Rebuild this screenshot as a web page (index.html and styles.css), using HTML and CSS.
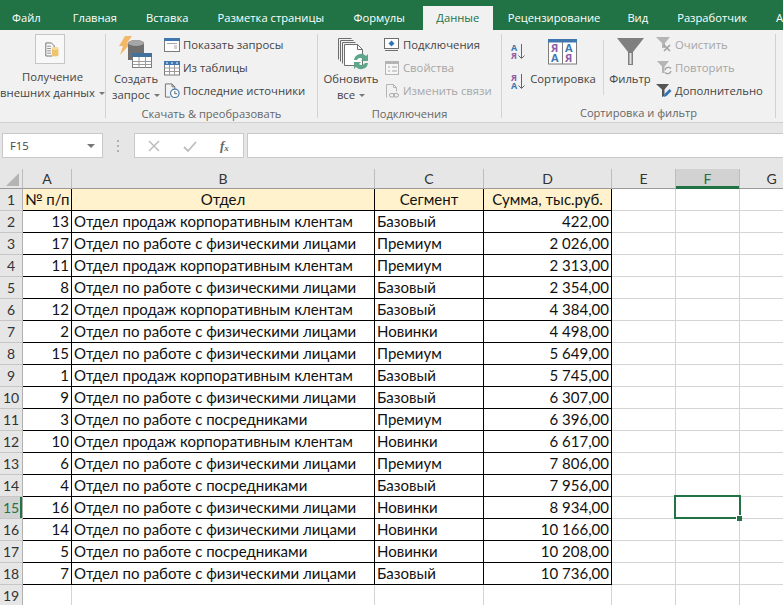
FILE: index.html
```html
<!DOCTYPE html>
<html lang="ru">
<head>
<meta charset="utf-8">
<title>Excel</title>
<link rel="stylesheet" href="styles.css">
</head>
<body>
<nav class="tabs">
  <span class="tab tab-file">Файл</span>
  <span class="tab">Главная</span>
  <span class="tab">Вставка</span>
  <span class="tab">Разметка страницы</span>
  <span class="tab tab-formulas">Формулы</span>
  <span class="tab active">Данные</span>
  <span class="tab tab-review">Рецензирование</span>
  <span class="tab">Вид</span>
  <span class="tab">Разработчик</span>
  <span class="tab">А</span>
</nav>
<section class="ribbon">
  <div class="group g1">
    <div class="group-body">
      <div class="big big-ext">
        <svg class="ext-icon" width="30" height="30" viewBox="0 0 30 30">
          <path d="M10.500 8.500h6l3 3v3M10.500 8.500v14h7" fill="none" stroke="#6e6e6e"/>
          <path d="M12 12h4M12 14.500h4M12 17h4M12 19.500h4" stroke="#8a8a8a"/>
          <path d="M17 14.500a3.500 1.500 0 0 1 7 0v7a3.500 1.500 0 0 1-7 0z" fill="#f0c36d"/>
          <ellipse cx="20.500" cy="14.500" rx="3.500" ry="1.500" fill="#f7dda0"/>
        </svg>
        <span class="big-text">Получение</span>
        <span class="big-text">внешних данных<i class="caret"></i></span>
      </div>
    </div>
    <div class="group-label">&nbsp;</div>
  </div>
  <div class="group g2">
    <div class="group-body">
      <div class="big big-query">
        <svg width="56" height="37" viewBox="0 0 56 37">
          <path d="M17 2h7l-5 7h4L12 21l3-9h-4z" fill="#f2b866"/>
          <path d="M20 9a8 3 0 0 1 16 0v17H20z" fill="#6f6f6f"/>
          <ellipse cx="28" cy="9" rx="8" ry="3" fill="#a6a6a6"/>
          <rect x="24.500" y="19.500" width="19" height="14" fill="#fff" stroke="#7b7b7b"/>
          <rect x="24" y="19" width="20" height="4" fill="#41719c"/>
          <path d="M24.500 27.500h19M24.500 30.500h19M31 23v11M37.500 23v11" stroke="#9a9a9a"/>
        </svg>
        <span class="big-text">Создать</span>
        <span class="big-text">запрос<i class="caret"></i></span>
      </div>
      <div class="small-list">
        <div class="small">
          <svg width="16" height="16" viewBox="0 0 16 16">
            <rect x=".5" y="1.500" width="15" height="13" fill="#fff" stroke="#7b7b7b"/>
            <rect y="1" width="16" height="3" fill="#3f77ae"/>
            <path d="M3 6.500h10M10 9h3M10 11h3" stroke="#a8a8a8"/>
          </svg>
          <span>Показать запросы</span>
        </div>
        <div class="small">
          <svg width="16" height="16" viewBox="0 0 16 16">
            <rect x=".5" y="1.500" width="15" height="13.500" fill="#fff" stroke="#7b7b7b"/>
            <rect y="1" width="16" height="4" fill="#3f77ae"/>
            <path d="M.5 8h15M.5 11.500h15M5.500 5v10M10.500 5v10" stroke="#9a9a9a"/>
            <path d="M2 3h2M7 3h2M12 3h2" stroke="#fff"/>
          </svg>
          <span>Из таблицы</span>
        </div>
        <div class="small">
          <svg width="16" height="17" viewBox="0 0 17 17">
            <path d="M1.500 15.500V1.500h7l3 3v3M8.500 1.500v3h3M1.500 15.500h5" fill="none" stroke="#707070"/>
            <circle cx="11.500" cy="11.500" r="4.500" fill="#fff" stroke="#3f77ae" stroke-width="1.200"/>
            <path d="M11.500 9v3h2.500" fill="none" stroke="#555"/>
          </svg>
          <span>Последние источники</span>
        </div>
      </div>
    </div>
    <div class="group-label">Скачать &amp; преобразовать</div>
  </div>
  <div class="group g3">
    <div class="group-body">
      <div class="big big-refresh">
        <svg width="58" height="37" viewBox="0 0 58 37">
          <path d="M16.500 25.500V4.500h13M18.500 27.500V6.500h13M20.500 29.500V8.500h13" fill="none" stroke="#6e6e6e"/>
          <path d="M22.500 31.500v-21h13l5 5v16z" fill="#fff" stroke="#6e6e6e"/>
          <path d="M35.500 10.500v5h5" fill="none" stroke="#6e6e6e"/>
          <path d="M32 26a7 7 0 0 1 12-4l2-2v7h-7l2-2a4 4 0 0 0-6 1z" fill="#5fa58a"/>
          <path d="M46 29a7 7 0 0 1-12 4l-2 2v-7h7l-2 2a4 4 0 0 0 6-1z" fill="#5fa58a"/>
        </svg>
        <span class="big-text">Обновить</span>
        <span class="big-text">все<i class="caret"></i></span>
      </div>
      <div class="small-list">
        <div class="small">
          <svg width="16" height="16" viewBox="0 0 16 16">
            <rect x=".5" y="1.500" width="14" height="10" fill="#fff" stroke="#6e6e6e"/>
            <path d="M1 13.500h13" stroke="#6e6e6e"/>
            <path d="M7.500 3.500l3 3-3 3-3-3z" fill="#2e75b6"/>
          </svg>
          <span>Подключения</span>
        </div>
        <div class="small off">
          <svg width="16" height="16" viewBox="0 0 16 16">
            <rect x="1.500" y="1.500" width="13" height="13" fill="#f6f6f6" stroke="#b5b5b5"/>
            <rect x="1" y="1" width="14" height="3" fill="#b5b5b5"/>
            <path d="M4 7h2M8 7h5M4 11h2M8 11h5" stroke="#a8a8a8"/>
          </svg>
          <span>Свойства</span>
        </div>
        <div class="small off">
          <svg width="16" height="16" viewBox="0 0 16 16">
            <path d="M2.500 14.500v-13h7l3 3v4M9.500 1.500v3h3" fill="none" stroke="#b5b5b5"/>
            <rect x="5.500" y="10.500" width="5" height="3.500" rx="1.700" fill="none" stroke="#a8a8a8"/>
            <rect x="9.500" y="10.500" width="5" height="3.500" rx="1.700" fill="none" stroke="#a8a8a8"/>
          </svg>
          <span>Изменить связи</span>
        </div>
      </div>
    </div>
    <div class="group-label">Подключения</div>
  </div>
  <div class="group g4">
    <div class="group-body">
      <div class="sort-arrows">
        <svg width="16" height="19" viewBox="0 0 16 19">
          <text x="1" y="8" class="gl gl-blue">А</text>
          <text x="1" y="16" class="gl gl-purple">Я</text>
          <path d="M11.500 1v14M8.500 12.500l3 3 3-3" fill="none" stroke="#666"/>
        </svg>
        <svg width="16" height="19" viewBox="0 0 16 19">
          <text x="1" y="8" class="gl gl-purple">Я</text>
          <text x="1" y="16" class="gl gl-blue">А</text>
          <path d="M11.500 1v14M8.500 12.500l3 3 3-3" fill="none" stroke="#666"/>
        </svg>
      </div>
      <div class="big big-sort">
        <svg width="66" height="37" viewBox="0 0 66 37">
          <rect x="18.500" y="5.500" width="28" height="24.500" fill="#fff" stroke="#7b7b7b"/>
          <rect x="18" y="5" width="29" height="3.500" fill="#3f77ae"/>
          <path d="M32.500 8v22" stroke="#7b7b7b"/>
          <text x="21" y="18" class="gs gl-purple">Я</text>
          <text x="35" y="18" class="gs gl-blue">А</text>
          <text x="21" y="28" class="gs gl-blue">А</text>
          <text x="35" y="28" class="gs gl-purple">Я</text>
        </svg>
        <span class="big-text">Сортировка</span>
      </div>
      <i class="vsep"></i>
      <div class="big big-filter">
        <svg width="52" height="37" viewBox="0 0 52 37">
          <path d="M13 4h27l-11 14v13h-5V18z" fill="#7f7f7f"/>
          <path d="M25.500 19h2v11h-2z" fill="#e4e4e4"/>
        </svg>
        <span class="big-text">Фильтр</span>
      </div>
      <div class="small-list">
        <div class="small">
          <svg width="16" height="17" viewBox="0 0 16 17">
            <path d="M0 1h14L9 7v5H6V7z" fill="#b5b5b5"/>
            <path d="M8 9l6 6M14 9l-6 6" stroke="#a0a0a0" stroke-width="1.500"/>
          </svg>
          <span class="off">Очистить</span>
        </div>
        <div class="small">
          <svg width="16" height="17" viewBox="0 0 16 17">
            <path d="M1 2h12L8.500 7.500V14H6V7.500z" fill="#b5b5b5"/>
            <path d="M9 11a3.500 3.500 0 0 1 6-1.500M15 12a3.500 3.500 0 0 1-6 1.500" fill="none" stroke="#a0a0a0" stroke-width="1.200"/>
          </svg>
          <span class="off">Повторить</span>
        </div>
        <div class="small">
          <svg width="16" height="17" viewBox="0 0 16 17">
            <path d="M0 2h13L8.500 7.500V14L6 15V7.500z" fill="#555"/>
            <path d="M8 15l.5-3 5-5 2 2-5 5z" fill="#2e75b6"/>
          </svg>
          <span>Дополнительно</span>
        </div>
      </div>
    </div>
    <div class="group-label">Сортировка и фильтр</div>
  </div>
</section>
<section class="formula">
  <div class="namebox"><span>F15</span><i class="name-caret"></i></div>
  <div class="dots"><i></i><i></i><i></i></div>
  <div class="fbtns">
    <svg width="14" height="14" viewBox="0 0 14 14"><path d="M2 2l10 10M12 2L2 12" stroke="#bdbdbd" stroke-width="1.500"/></svg>
    <svg width="14" height="14" viewBox="0 0 14 14"><path d="M1 8l4 4 8-9" fill="none" stroke="#bdbdbd" stroke-width="1.800"/></svg>
    <span class="fx">f<sub>x</sub></span>
  </div>
  <div class="finput"></div>
</section>
<main class="sheet">
  <table>
    <colgroup>
      <col class="w-h"><col class="w-a"><col class="w-b"><col class="w-c"><col class="w-d"><col class="w-e"><col class="w-e"><col class="w-e">
    </colgroup>
    <thead>
      <tr>
        <th class="corner"><i></i></th><th>A</th><th>B</th><th>C</th><th>D</th><th>E</th><th class="sel-col">F</th><th>G</th>
      </tr>
    </thead>
    <tbody>
      <tr class="hd"><th>1</th><td class="ctr">№ п/п</td><td class="ctr">Отдел</td><td class="ctr">Сегмент</td><td class="ctr last">Сумма, тыс.руб.</td><td></td><td></td><td></td></tr>
      <tr><th>2</th><td class="num">13</td><td>Отдел продаж корпоративным клентам</td><td>Базовый</td><td class="num">422,00</td><td></td><td></td><td></td></tr>
      <tr><th>3</th><td class="num">17</td><td>Отдел по работе с физическими лицами</td><td>Премиум</td><td class="num">2 026,00</td><td></td><td></td><td></td></tr>
      <tr><th>4</th><td class="num">11</td><td>Отдел продаж корпоративным клентам</td><td>Премиум</td><td class="num">2 313,00</td><td></td><td></td><td></td></tr>
      <tr><th>5</th><td class="num">8</td><td>Отдел по работе с физическими лицами</td><td>Базовый</td><td class="num">2 354,00</td><td></td><td></td><td></td></tr>
      <tr><th>6</th><td class="num">12</td><td>Отдел продаж корпоративным клентам</td><td>Базовый</td><td class="num">4 384,00</td><td></td><td></td><td></td></tr>
      <tr><th>7</th><td class="num">2</td><td>Отдел по работе с физическими лицами</td><td>Новинки</td><td class="num">4 498,00</td><td></td><td></td><td></td></tr>
      <tr><th>8</th><td class="num">15</td><td>Отдел по работе с физическими лицами</td><td>Премиум</td><td class="num">5 649,00</td><td></td><td></td><td></td></tr>
      <tr><th>9</th><td class="num">1</td><td>Отдел продаж корпоративным клентам</td><td>Базовый</td><td class="num">5 745,00</td><td></td><td></td><td></td></tr>
      <tr><th>10</th><td class="num">9</td><td>Отдел по работе с физическими лицами</td><td>Базовый</td><td class="num">6 307,00</td><td></td><td></td><td></td></tr>
      <tr><th>11</th><td class="num">3</td><td>Отдел по работе с посредниками</td><td>Премиум</td><td class="num">6 396,00</td><td></td><td></td><td></td></tr>
      <tr><th>12</th><td class="num">10</td><td>Отдел продаж корпоративным клентам</td><td>Новинки</td><td class="num">6 617,00</td><td></td><td></td><td></td></tr>
      <tr><th>13</th><td class="num">6</td><td>Отдел по работе с физическими лицами</td><td>Премиум</td><td class="num">7 806,00</td><td></td><td></td><td></td></tr>
      <tr><th>14</th><td class="num">4</td><td>Отдел по работе с посредниками</td><td>Базовый</td><td class="num">7 956,00</td><td></td><td></td><td></td></tr>
      <tr><th class="sel-row">15</th><td class="num">16</td><td>Отдел по работе с физическими лицами</td><td>Новинки</td><td class="num">8 934,00</td><td></td><td class="selected"></td><td></td></tr>
      <tr><th>16</th><td class="num">14</td><td>Отдел по работе с физическими лицами</td><td>Новинки</td><td class="num">10 166,00</td><td></td><td></td><td></td></tr>
      <tr><th>17</th><td class="num">5</td><td>Отдел по работе с посредниками</td><td>Новинки</td><td class="num">10 208,00</td><td></td><td></td><td></td></tr>
      <tr><th>18</th><td class="num">7</td><td>Отдел по работе с физическими лицами</td><td>Базовый</td><td class="num">10 736,00</td><td></td><td></td><td></td></tr>
      <tr class="blank"><th>19</th><td></td><td></td><td></td><td></td><td></td><td></td><td></td></tr>
    </tbody>
  </table>
</main>
</body>
</html>
```

FILE: styles.css
```css
* { box-sizing: border-box; }
html, body { margin: 0; height: 100%; overflow: hidden; background: #fff; }
body { width: 783px; height: 605px; font-family: "Open Sans", "Liberation Sans", sans-serif; font-size: 11.3px; color: #444; }

.tabs { display: flex; height: 30px; background: #217346; color: #fff; overflow: hidden; white-space: nowrap; font-size: 11.2px; }
.tab { padding: 0 14.5px; line-height: 36px; height: 30px; flex: none; }
.tab-file { margin-left: -2.5px; padding-right: 17.5px; }
.tab-formulas { padding-left: 15px; padding-right: 18px; }
.tab-review { padding-left: 15px; padding-right: 12.5px; }
.tab.active { background: #f1f1f1; color: #217346; width: 70px; padding: 0; text-align: center; height: 24px; margin-top: 6px; line-height: 24px; }

.ribbon { display: flex; height: 93px; background: #f1f1f1; border-bottom: 1px solid #d0d0d0; }
.group { display: flex; flex-direction: column; height: 84px; margin-top: 4px; border-right: 1px solid #d2d2d2; }
.g1 { width: 106px; }
.g2 { width: 212px; }
.g3 { width: 184px; }
.g4 { width: 274px; }
.group-body { flex: 1; display: flex; }
.group-label { height: 16px; margin-top: 3px; margin-bottom: -3px; line-height: 16px; text-align: center; color: #666; white-space: nowrap; font-size: 11.1px; }

.big { display: flex; flex-direction: column; align-items: center; flex: none; }
.big svg { display: block; flex: none; }
.big-text { line-height: 16px; white-space: nowrap; }
.big-ext { width: 105px; }
.ext-icon { background: #f8f8f8; border: 1px solid #c6c6c6; margin-bottom: 5px; margin-right: 5px; }
.big-query { width: 56px; margin-left: 2px; }
.big-refresh { width: 58px; margin-left: 4px; margin-right: 4px; }
.big-sort { width: 66px; margin-left: 5px; }
.big-filter { width: 52px; }
.caret { display: inline-block; width: 0; height: 0; margin-left: 4px; vertical-align: 2px; border: 3px solid transparent; border-top-color: #777; border-bottom: 0; }

.small-list { display: flex; flex-direction: column; flex: none; margin-top: -1px; }
.small { display: flex; align-items: center; gap: 3px; height: 23px; white-space: nowrap; }
.small svg { flex: none; }
.small.off, .off { color: #a6a6a6; }

.g4 .group-body { padding-left: 8px; }
.sort-arrows { display: flex; flex-direction: column; gap: 11px; padding-top: 9px; width: 15px; flex: none; }
.sort-arrows svg { display: block; overflow: visible; }
.gl { font: bold 9px "Open Sans", sans-serif; }
.gs { font: 700 11px "Open Sans", sans-serif; }
.gl-blue { fill: #3f77ae; }
.gl-purple { fill: #8d5ba6; }
.vsep { width: 1px; height: 55px; margin: 6px 0 0 7px; background: #d6d6d6; flex: none; }

.formula { display: flex; height: 46px; padding-top: 10px; padding-left: 2px; background: #e6e6e6; color: #444; }
.namebox { display: flex; align-items: center; justify-content: space-between; width: 101px; height: 25px; padding: 0 7px 0 7px; background: #fff; border: 1px solid #c9c9c9; }
.name-caret { border: 4px solid transparent; border-top-color: #777; border-bottom: 0; width: 0; height: 0; }
.dots { display: flex; flex-direction: column; justify-content: center; gap: 3px; width: 31px; height: 25px; padding-left: 14px; }
.dots i { display: block; width: 2px; height: 2px; background: #b0b0b0; }
.fbtns { display: flex; align-items: center; width: 110px; height: 25px; padding-left: 12px; gap: 22px; background: #fff; border: 1px solid #c9c9c9; }
.fx { font: italic bold 13px "Liberation Serif", serif; color: #666; margin-left: 1px; }
.fx sub { font-size: 9px; vertical-align: -1px; line-height: 0; }
.finput { flex: 1; height: 25px; margin-left: 3px; background: #fff; border: 1px solid #c9c9c9; border-right: 0; }

.sheet { height: 436px; overflow: hidden; }
table { table-layout: fixed; border-collapse: separate; border-spacing: 0; width: 803px; font-family: Lato, "Liberation Sans", sans-serif; font-size: 15px; color: #111; }
.w-h { width: 23px; }
.w-a { width: 49px; }
.w-b { width: 303px; }
.w-c { width: 109px; }
.w-d { width: 128px; }
.w-e { width: 64px; }

th { font-weight: 400; background: #e6e6e6; color: #333; padding: 0; text-align: center; border-right: 1px solid #bdbdbd; border-bottom: 1px solid #bdbdbd; font-size: 14px; }
thead th { height: 20px; border-bottom-color: #9a9a9a; line-height: 19px; }
tbody th { height: 22px; border-bottom-color: #c6c6c6; border-right-color: #b0b0b0; }
td { height: 22px; padding: 0 2px 1px; border-right: 1px solid #d4d4d4; border-bottom: 1px solid #d4d4d4; white-space: nowrap; overflow: hidden; line-height: 20px; }
tbody tr:not(.blank) td:nth-child(-n+5) { border-bottom-color: #000; border-right-color: #000; }
.hd td:nth-child(-n+5) { background: #fff2cc; }
.ctr { text-align: center; }
.num { text-align: right; }
.corner { position: relative; }
.corner i { position: absolute; right: 3px; bottom: 2px; width: 0; height: 0; border-style: solid; border-width: 0 0 13px 13px; border-color: transparent transparent #b4b4b4 transparent; }
.sel-col { background: #d2d2d2; color: #217346; box-shadow: inset 0 -2px 0 #217346; border-bottom-color: #217346; }
.sel-row { background: #d2d2d2; color: #217346; box-shadow: inset -2px 0 0 #217346; }
td.selected { position: relative; overflow: visible; }
td.selected::before { content: ""; position: absolute; left: -2px; top: -2px; right: -2px; bottom: -1px; border: 2px solid #217346; }
td.selected::after { content: ""; position: absolute; right: -3px; bottom: -3px; width: 5px; height: 5px; background: #217346; box-shadow: -1px -1px 0 #fff; }
```
